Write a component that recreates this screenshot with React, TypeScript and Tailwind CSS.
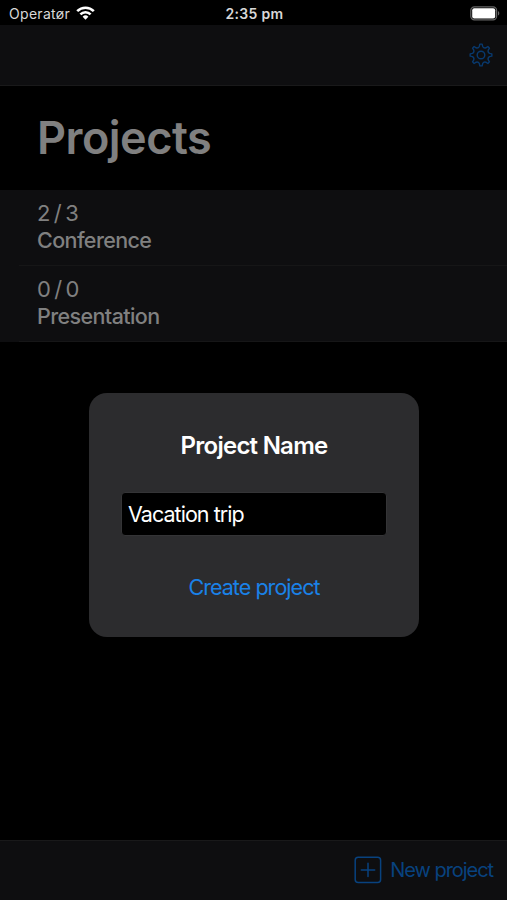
import { useState } from 'react'

type Project = {
  name: string
  done: number
  total: number
}

const projects: Project[] = [
  { name: 'Conference', done: 2, total: 3 },
  { name: 'Presentation', done: 0, total: 0 },
]

// Eight rounded teeth around the origin
const gearPath = (() => {
  const point = (radius: number, degrees: number) => {
    const a = (degrees * Math.PI) / 180
    return `${(radius * Math.sin(a)).toFixed(2)} ${(-radius * Math.cos(a)).toFixed(2)}`
  }
  let d = `M${point(10.9, -6)}`
  for (let i = 0; i < 8; i++) {
    const a = i * 45
    d += `L${point(10.9, a + 6)}L${point(8.7, a + 11)}Q${point(7.1, a + 22.5)} ${point(8.7, a + 34)}L${point(10.9, a + 39)}`
  }
  return d + 'Z'
})()

function StatusBar() {
  return (
    <header className="grid h-[25px] shrink-0 grid-cols-3 items-center bg-black pl-[9px] pr-[7px] pt-[2px] text-[14px] text-[#d8d8d8]">
      <div className="flex items-center gap-1.5">
        <span className="tracking-[0.3px]">Operatør</span>
        <svg className="-mt-px" width="19" height="14" viewBox="0 0 19 14" fill="none" stroke="#fff" strokeWidth="2.6">
          <path d="M1.2 5.1a11.8 11.8 0 0 1 16.6 0" />
          <path d="M4.4 8.3a7.2 7.2 0 0 1 10.2 0" />
          <path d="M9.5 13.8 6.6 10.8a4.1 4.1 0 0 1 5.8 0Z" fill="#fff" stroke="none" />
        </svg>
      </div>
      <span className="text-center font-semibold tracking-[0.3px]">2:35 pm</span>
      <svg className="-mt-px justify-self-end" width="30" height="15" viewBox="0 0 30 15">
        <rect x="0.8" y="0.8" width="25.8" height="13" rx="3.6" fill="none" stroke="#666" strokeWidth="1.2" />
        <rect x="2.2" y="2.2" width="23" height="10.2" rx="2" fill="#fff" />
        <path d="M28 5v4.6c1.8-.8 1.8-3.8 0-4.6Z" fill="#666" />
      </svg>
    </header>
  )
}

function ProjectRow({ project }: { project: Project }) {
  return (
    <li className="relative flex h-[76px] flex-col pl-[37px] pt-[10px] text-[22px] leading-[27px] text-[#808080]">
      <span className="tracking-[-0.4px] [word-spacing:-2px]">
        {project.done} / {project.total}
      </span>
      <span className="text-[21.5px] font-medium tracking-[-0.6px]">{project.name}</span>
      <div className="absolute bottom-0 left-[19px] right-0 h-px bg-[#161617]" />
    </li>
  )
}

export default function App() {
  const [name, setName] = useState('Vacation trip')

  return (
    <div className="relative flex h-[900px] w-[507px] flex-col overflow-hidden bg-black font-['Inter',sans-serif]">
      <StatusBar />

      <nav className="flex h-[61px] shrink-0 items-center justify-end border-b border-[#19191a] bg-[#0e0e10] pr-[14px]">
        <button type="button" aria-label="Settings">
          <svg width="24" height="24" viewBox="-12 -12 24 24" fill="none" stroke="#08396e" strokeWidth="1.4" strokeLinejoin="round">
            <path d={gearPath} />
            <circle r="3.8" />
          </svg>
        </button>
      </nav>

      <main className="grow">
        <h1 className="h-[104px] pl-[37px] pt-[24px] text-[45px] font-semibold leading-[56px] tracking-[-0.5px] text-[#808080]">
          Projects
        </h1>
        <ul className="bg-[#0e0e10]">
          {projects.map((project) => (
            <ProjectRow key={project.name} project={project} />
          ))}
        </ul>
      </main>

      <footer className="flex h-[60px] shrink-0 items-center justify-end border-t border-[#19191a] bg-[#0e0e10] pr-[14px] pb-px">
        <button type="button" className="flex items-center gap-[8px] text-[20px] text-[#08427f]">
          <svg width="28" height="28" viewBox="0 0 28 28" fill="none" stroke="currentColor" strokeWidth="1.5" strokeLinecap="round">
            <rect x="1.2" y="1.2" width="25.4" height="25.4" rx="3" />
            <path d="M14 7.2v13.4M7.3 13.9h13.4" />
          </svg>
          <span className="tracking-[-1.05px]">New project</span>
        </button>
      </footer>

      <div role="dialog" className="absolute left-[89px] top-[393px] flex h-[244px] w-[330px] flex-col items-center rounded-[18px] bg-[#2c2c2e] px-8 pt-[38px]">
        <h2 className="text-[24px] font-semibold leading-[30px] tracking-[-0.75px] text-white">Project Name</h2>
        <input
          aria-label="Project Name"
          value={name}
          onChange={(e) => setName(e.target.value)}
          className="mt-[31px] h-[44px] w-[266px] rounded-[4px] border border-[#343436] bg-black px-[6px] text-[21.5px] tracking-[-0.95px] text-white outline-none"
        />
        <button type="button" className="mt-[36px] text-[21.5px] leading-[30px] tracking-[-0.95px] text-[#1a82e8]">
          Create project
        </button>
      </div>
    </div>
  )
}
